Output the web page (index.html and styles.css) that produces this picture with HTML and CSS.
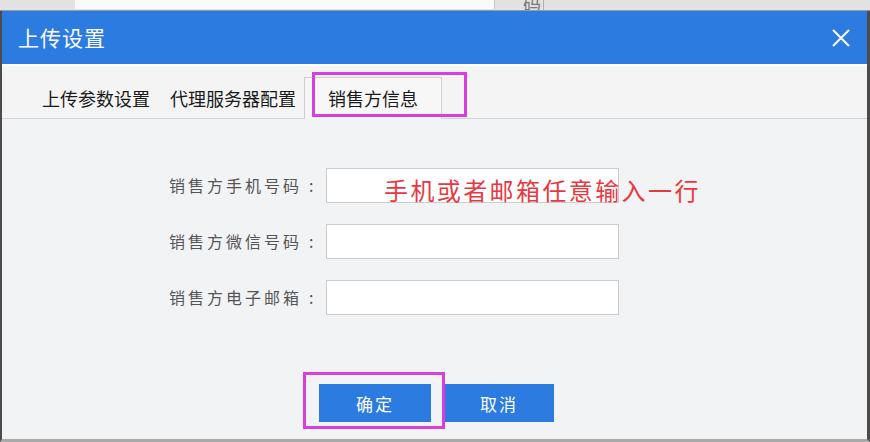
FILE: index.html
```html
<!DOCTYPE html>
<html lang="zh-CN">
<head>
<meta charset="utf-8">
<title>上传设置</title>
<link rel="stylesheet" href="styles.css">
</head>
<body>
<div class="backdrop">
  <div class="bg-input"></div>
  <div class="bg-char"><span>码</span></div>
  <div class="bg-line"></div>
</div>
<div class="dialog">
  <div class="header">
    <div class="title">上传设置</div>
    <svg class="close" width="20" height="20" viewBox="0 0 20 20"><path d="M2 2 L18 18 M18 2 L2 18" stroke="#ffffff" stroke-width="2" fill="none"/></svg>
  </div>
  <div class="tabs">
    <div class="tab">上传参数设置</div>
    <div class="tab">代理服务器配置</div>
    <div class="tab active">销售方信息</div>
  </div>
  <div class="content">
    <div class="form">
      <label class="label">销售方手机号码<span class="colon">:</span></label><div class="input"></div>
      <label class="label">销售方微信号码<span class="colon">:</span></label><div class="input"></div>
      <label class="label">销售方电子邮箱<span class="colon">:</span></label><div class="input"></div>
    </div>
    <div class="buttons">
      <div class="btn">确定</div>
      <div class="btn cancel">取消</div>
    </div>
  </div>
  <div class="note">手机或者邮箱任意输入一行</div>
  <div class="mark mark-tab"></div>
  <div class="mark mark-btn"></div>
</div>
</body>
</html>
```
FILE: styles.css
```css
html, body {
  margin: 0;
  padding: 0;
}
body {
  width: 870px;
  height: 442px;
  overflow: hidden;
  background: #e4e4e4;
  font-family: "Noto Sans CJK SC", "Noto Sans", sans-serif;
}
.backdrop {
  height: 11px;
  display: flex;
  background: #e2e2e2;
  border-bottom: 1px solid #9a9a9a;
  box-sizing: border-box;
  overflow: hidden;
}
.bg-input {
  margin-left: 75px;
  width: 419px;
  height: 9px;
  background: #fafafa;
  border-right: 1px solid #c8c8c8;
}
.bg-char {
  margin-left: 28px;
  width: 20px;
  height: 10px;
  overflow: hidden;
  display: flex;
  align-items: flex-end;
}
.bg-char span {
  font-size: 18px;
  line-height: 18px;
  color: #777;
  margin-bottom: -2px;
}
.bg-line {
  width: 1px;
  height: 10px;
  background: #b0b0b0;
}
.dialog {
  position: relative;
  height: 431px;
  border-left: 2px solid #4b4b4b;
  border-right: 3px solid #4b4b4b;
  border-bottom: 3px solid #a9a9a9;
  box-sizing: border-box;
  background: #f2f3f5;
  display: flex;
  flex-direction: column;
}
.header {
  height: 53px;
  flex: none;
  background: #2b7be0;
  display: flex;
  align-items: center;
  justify-content: space-between;
  padding: 0 16px 0 16px;
}
.title {
  color: #ffffff;
  font-size: 21px;
  letter-spacing: 1px;
  line-height: 1;
}
.close {
  display: block;
}
.tabs {
  height: 55px;
  flex: none;
  box-sizing: border-box;
  border-top: 2px solid #ffffff;
  background: #f4f4f4;
  border-bottom: 1px solid #d2d2d2;
  display: flex;
  align-items: flex-end;
  padding-left: 40px;
}
.tab {
  font-size: 18px;
  color: #1a1a1a;
  line-height: 40px;
  height: 40px;
  margin-right: 20px;
}
.tab.active {
  margin-left: -12px;
  padding: 0 23px 0 23px;
  background: #f7f7f7;
  border: 1px solid #cfcfcf;
  border-bottom: none;
  margin-bottom: -1px;
  height: 41px;
}
.content {
  flex: 1;
  padding-top: 49px;
}
.form {
  display: grid;
  grid-template-columns: 155px 293px;
  column-gap: 2px;
  row-gap: 21px;
  padding-left: 167px;
  align-items: center;
}
.label {
  font-size: 16px;
  letter-spacing: 3px;
  color: #555555;
  white-space: nowrap;
  line-height: 35px;
}
.colon {
  margin-left: 7px;
  letter-spacing: 0;
}
.input {
  height: 35px;
  box-sizing: border-box;
  background: #ffffff;
  border: 1px solid #cccccc;
}
.buttons {
  display: flex;
  gap: 13px;
  padding-left: 317px;
  margin-top: 69px;
}
.btn {
  width: 112px;
  height: 38px;
  background: #2c7be0;
  color: #ffffff;
  font-size: 17px;
  letter-spacing: 2px;
  display: flex;
  align-items: center;
  justify-content: center;
}
.btn.cancel {
  width: 110px;
}
.note {
  position: absolute;
  left: 382px;
  top: 164px;
  font-size: 24px;
  letter-spacing: 2.4px;
  line-height: 30px;
  color: #e8383f;
  white-space: nowrap;
}
.mark {
  position: absolute;
  border: 3px solid #d83fdc;
  box-sizing: border-box;
}
.mark-tab {
  left: 310px;
  top: 61px;
  width: 155px;
  height: 45px;
}
.mark-btn {
  left: 301px;
  top: 361px;
  width: 142px;
  height: 57px;
}
```
